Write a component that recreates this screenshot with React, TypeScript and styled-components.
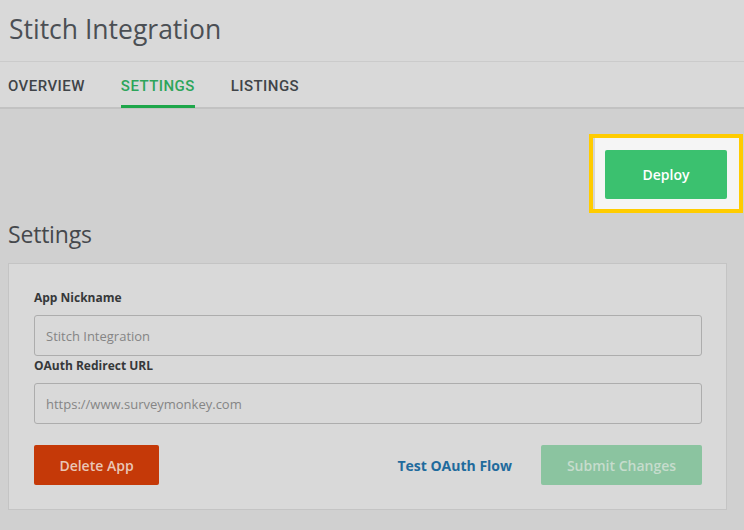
import React, { useState } from "react";
import styled, { createGlobalStyle } from "styled-components";

const GlobalStyle = createGlobalStyle`
  html, body {
    margin: 0;
    padding: 0;
    background: #d0d0d0;
    font-family: "Lato", "Liberation Sans", sans-serif;
  }
`;

const TABS = ["OVERVIEW", "SETTINGS", "LISTINGS"];

const Page = styled.div`
  width: 744px;
  height: 530px;
  overflow: hidden;
  background: #d0d0d0;
`;

const Header = styled.header`
  height: 61px;
  display: flex;
  align-items: center;
  padding-left: 9px;
  background: #d9d9d9;
  border-bottom: 1px solid #cbcbcb;
`;

const Title = styled.h1`
  margin: 0 0 3px;
  font-family: "Open Sans", sans-serif;
  font-size: 26.5px;
  font-weight: 400;
  color: #4b4f54;
  letter-spacing: 0;
`;

const TabBar = styled.nav`
  height: 45px;
  display: flex;
  gap: 36px;
  padding-left: 8px;
  background: #d9d9d9;
  border-bottom: 2px solid #c2c2c2;
`;

const Tab = styled.div<{ $active: boolean }>`
  display: flex;
  align-items: center;
  font-family: "Roboto", sans-serif;
  font-size: 15px;
  font-weight: 500;
  letter-spacing: 0.45px;
  color: ${({ $active }) => ($active ? "#2da55a" : "#404448")};
  border-bottom: 3px solid ${({ $active }) => ($active ? "#1ea64a" : "transparent")};
  margin-bottom: -1px;
  padding-top: 4px;
  cursor: pointer;
`;

const Main = styled.main`
  padding: 25px 17px 0 8px;
`;

const DeployRow = styled.div`
  display: flex;
  justify-content: flex-end;
  margin-right: -16px;
`;

const Spotlight = styled.div`
  border: 4px solid #ffcc00;
  background: #f5f5f5;
  padding: 12px 12px 10px 12px;
  box-shadow: inset 2px 0 0 #d6d6d6;
`;

const Button = styled.button<{ $tone: "green" | "red" | "muted" }>`
  height: 40px;
  border: none;
  border-radius: 2px;
  font-family: "Open Sans", sans-serif;
  font-size: 14px;
  font-weight: 600;
  cursor: pointer;
  background: ${({ $tone }) =>
    $tone === "green" ? "#3bc16f" : $tone === "red" ? "#c53908" : "#8bc4a0"};
  color: ${({ $tone }) =>
    $tone === "green" ? "#ffffff" : $tone === "red" ? "#e9c6b6" : "#c6dccd"};
`;

const DeployButton = styled(Button)`
  width: 122px;
  height: 49px;
`;

const Heading = styled.h2`
  margin: 5px 0 13px;
  font-family: "Open Sans", sans-serif;
  font-size: 23px;
  font-weight: 400;
  color: #45484c;
  letter-spacing: -0.2px;
`;

const Card = styled.section`
  height: 247px;
  box-sizing: border-box;
  padding: 25px 24px 0 25px;
  background: #d9d9d9;
  border: 1px solid #c4c4c4;
  display: flex;
  flex-direction: column;
`;

const Label = styled.label`
  font-family: "Open Sans", sans-serif;
  font-size: 12px;
  font-weight: 700;
  color: #363839;
  line-height: 18px;
  margin-bottom: 8px;
`;

const Input = styled.input`
  height: 41px;
  box-sizing: border-box;
  padding: 0 11px;
  background: #d9d9d9;
  border: 1px solid #adadad;
  border-radius: 3px;
  font-family: "Open Sans", sans-serif;
  font-size: 13px;
  color: #858585;
  outline: none;
  margin-bottom: 1px;
  &::placeholder {
    color: #858585;
  }
`;

const Actions = styled.div`
  display: flex;
  align-items: center;
  margin-top: 20px;
`;

const DeleteButton = styled(Button)`
  width: 125px;
`;

const SubmitButton = styled(Button)`
  width: 161px;
  cursor: default;
`;

const TestLink = styled.a`
  margin-left: auto;
  margin-right: 29px;
  font-family: "Open Sans", sans-serif;
  font-size: 14px;
  font-weight: 700;
  color: #1f6b9d;
  text-decoration: none;
  cursor: pointer;
`;

function App() {
  const [activeTab, setActiveTab] = useState("SETTINGS");
  const [nickname, setNickname] = useState("");
  const [redirect, setRedirect] = useState("");

  return (
    <Page>
      <GlobalStyle />
      <Header>
        <Title>Stitch Integration</Title>
      </Header>
      <TabBar>
        {TABS.map((tab) => (
          <Tab key={tab} $active={tab === activeTab} onClick={() => setActiveTab(tab)}>
            {tab}
          </Tab>
        ))}
      </TabBar>
      <Main>
        <DeployRow>
          <Spotlight>
            <DeployButton $tone="green">Deploy</DeployButton>
          </Spotlight>
        </DeployRow>
        <Heading>Settings</Heading>
        <Card>
          <Label>App Nickname</Label>
          <Input
            placeholder="Stitch Integration"
            value={nickname}
            onChange={(e) => setNickname(e.target.value)}
          />
          <Label>OAuth Redirect URL</Label>
          <Input
            placeholder="https://www.surveymonkey.com"
            value={redirect}
            onChange={(e) => setRedirect(e.target.value)}
          />
          <Actions>
            <DeleteButton $tone="red">Delete App</DeleteButton>
            <TestLink>Test OAuth Flow</TestLink>
            <SubmitButton $tone="muted" disabled>
              Submit Changes
            </SubmitButton>
          </Actions>
        </Card>
      </Main>
    </Page>
  );
}

export default App;
